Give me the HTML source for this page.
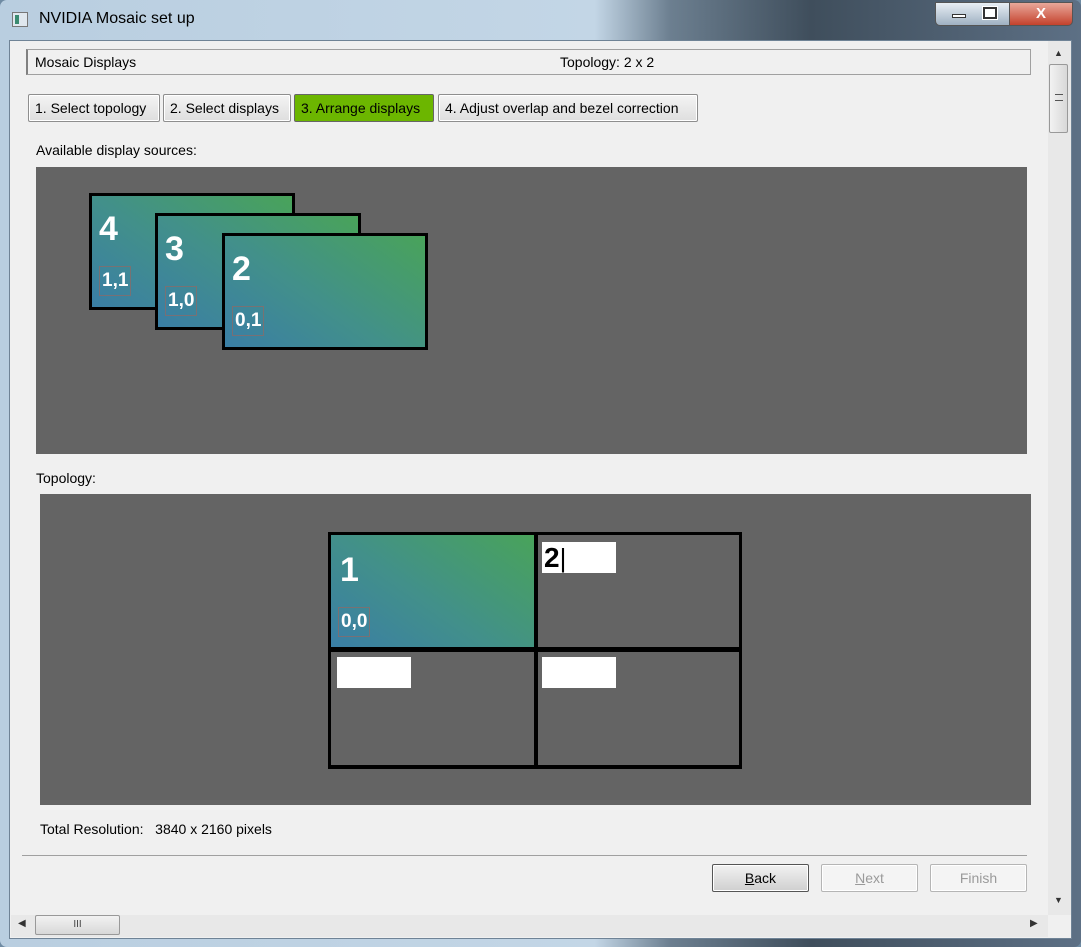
<!DOCTYPE html>
<html><head><style>
*{margin:0;padding:0;box-sizing:border-box}
body{width:1081px;height:947px;position:relative;overflow:hidden;font-family:"Liberation Sans",sans-serif;font-size:13px;color:#000;background:#6f8ba3}
.abs{position:absolute}
.title{left:0;top:0;width:1081px;height:947px;border-radius:7px;background:linear-gradient(90deg,#b9cee0 0%,#c3d6e6 55%,#6c7f90 62%,#3f4e5c 75%,#5d7085 100%)}
.content{left:9px;top:40px;width:1063px;height:899px;background:#f0f0f0;border:1px solid #6f8396}
.btn{background:linear-gradient(#f4f4f4,#dedede);border:1px solid #8e8e8e;border-radius:2px;height:28px;line-height:26px;padding:0 6px;font-size:14px;box-shadow:inset 0 0 0 1px #fff}
.card{border:3px solid #000;background:linear-gradient(35deg,#3a7ea5 0%,#42908a 45%,#49a35a 100%);color:#fff;font-weight:bold}
.big{position:absolute;left:7px;font-size:34px;line-height:38px}
.small{position:absolute;left:7px;font-size:19px;line-height:24px;border:1px solid rgba(160,100,90,0.6);padding:2px 2px}
.panel{background:#646464}
.cell{background:#646464}
.wb{position:absolute;background:#fff;width:74px;height:31px}
</style></head><body>
<div class="abs title"></div>
<div class="abs" style="left:12px;top:12px;width:16px;height:15px;background:#dfe7ee;border:1px solid #777"><div style="position:absolute;left:2px;top:2px;width:4px;height:9px;background:#3a8a70"></div></div>
<div class="abs" style="left:39px;top:10px;font-size:16px;color:#000">NVIDIA Mosaic set up</div>
<div class="abs" style="left:935px;top:2px;width:93px;height:24px;border:1px solid #555;border-radius:0 0 5px 5px;background:linear-gradient(#e8eef4,#9fb1c2)"></div>
<div class="abs" style="left:1009px;top:2px;width:64px;height:24px;border:1px solid #555;border-radius:0 0 5px 0;background:linear-gradient(#e9a89a,#c4422d);color:#fff;font-weight:bold;text-align:center;font-size:15px;line-height:22px">X</div>
<div class="abs" style="left:952px;top:14px;width:14px;height:4px;background:#fff;border:1px solid #333"></div>
<div class="abs" style="left:983px;top:7px;width:14px;height:12px;border:2px solid #333;background:#fff;outline:1px solid #fff"></div>
<div class="abs content"></div>
<div class="abs" style="left:26px;top:49px;width:1005px;height:26px;border:1px solid #a0a0a0;border-left:2px solid #808080;background:#f0f0f0"></div>
<div class="abs" style="left:35px;top:54px;font-size:14px">Mosaic Displays</div>
<div class="abs" style="left:560px;top:54px;font-size:14px">Topology: 2 x 2</div>
<div class="abs btn" style="left:28px;top:94px;width:132px">1. Select topology</div>
<div class="abs btn" style="left:163px;top:94px;width:128px">2. Select displays</div>
<div class="abs btn" style="left:294px;top:94px;width:140px;background:#6cb600;border-color:#666;box-shadow:none">3. Arrange displays</div>
<div class="abs btn" style="left:438px;top:94px;width:260px">4. Adjust overlap and bezel correction</div>
<div class="abs" style="left:36px;top:142px;font-size:14px">Available display sources:</div>
<div class="abs panel" style="left:36px;top:167px;width:991px;height:287px"></div>
<div class="abs card" style="left:89px;top:193px;width:206px;height:117px"><div class="big" style="top:14px">4</div><div class="small" style="top:70px">1,1</div></div>
<div class="abs card" style="left:155px;top:213px;width:206px;height:117px"><div class="big" style="top:14px">3</div><div class="small" style="top:70px">1,0</div></div>
<div class="abs card" style="left:222px;top:233px;width:206px;height:117px"><div class="big" style="top:14px">2</div><div class="small" style="top:70px">0,1</div></div>
<div class="abs" style="left:36px;top:470px;font-size:14px">Topology:</div>
<div class="abs panel" style="left:40px;top:494px;width:991px;height:311px"></div>
<div class="abs" style="left:328px;top:532px;width:414px;height:237px;background:#000"></div>
<div class="abs card" style="left:331px;top:535px;width:203px;height:112px;border:none"><div class="big" style="top:16px;left:9px">1</div><div class="small" style="top:72px;left:7px">0,0</div></div>
<div class="abs cell" style="left:538px;top:535px;width:201px;height:112px"><div class="wb" style="left:4px;top:7px;font-weight:bold;font-size:28px;line-height:31px;padding-left:2px">2<span style="font-weight:normal;font-size:26px">|</span></div></div>
<div class="abs cell" style="left:331px;top:652px;width:203px;height:113px"><div class="wb" style="left:6px;top:5px"></div></div>
<div class="abs cell" style="left:538px;top:652px;width:201px;height:113px"><div class="wb" style="left:4px;top:5px"></div></div>
<div class="abs" style="left:40px;top:821px;font-size:14px">Total Resolution:&nbsp;&nbsp; 3840 x 2160 pixels</div>
<div class="abs" style="left:22px;top:855px;width:1005px;height:1px;background:#a0a0a0"></div>
<div class="abs btn" style="left:712px;top:864px;width:97px;text-align:center;border-color:#555;background:linear-gradient(#f2f2f2,#cfcfcf)"><u>B</u>ack</div>
<div class="abs btn" style="left:821px;top:864px;width:97px;text-align:center;color:#9a9a9a;background:#f4f4f4;border-color:#b5b5b5"><u>N</u>ext</div>
<div class="abs btn" style="left:930px;top:864px;width:97px;text-align:center;color:#9a9a9a;background:#f4f4f4;border-color:#b5b5b5">Finish</div>
<div class="abs" style="left:1048px;top:41px;width:23px;height:874px;background:#e8e8e8"></div>
<div class="abs" style="left:1054px;top:48px;font-size:9px;color:#333">▲</div>
<div class="abs" style="left:1054px;top:895px;font-size:9px;color:#333">▼</div>
<div class="abs" style="left:1049px;top:64px;width:19px;height:69px;border:1px solid #999;border-radius:2px;background:linear-gradient(90deg,#f2f2f2,#d8d8d8)"><div style="position:absolute;left:5px;top:29px;width:8px;height:7px;border-top:1px solid #555;border-bottom:1px solid #555"></div></div>
<div class="abs" style="left:11px;top:915px;width:1037px;height:22px;background:#e8e8e8"></div>
<div class="abs" style="left:18px;top:918px;font-size:10px;color:#333">◀</div>
<div class="abs" style="left:1030px;top:918px;font-size:10px;color:#333">▶</div>
<div class="abs" style="left:35px;top:915px;width:85px;height:20px;border:1px solid #999;border-radius:2px;background:linear-gradient(#f2f2f2,#d8d8d8);text-align:center;font-size:10px;line-height:18px;color:#444">III</div>
</body></html>
